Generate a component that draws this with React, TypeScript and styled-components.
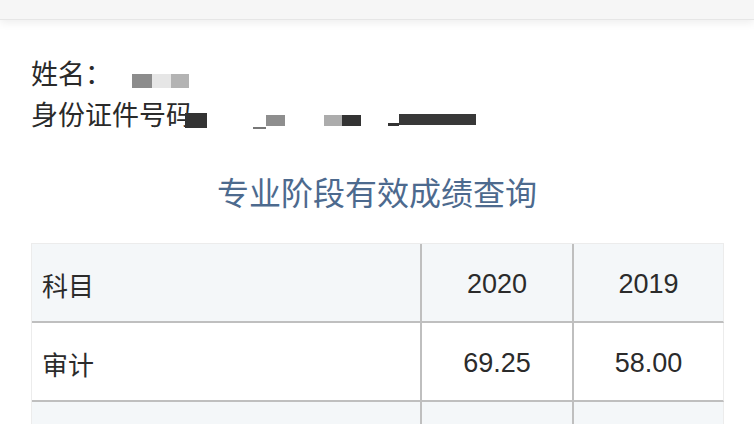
import React from "react";
import styled, { createGlobalStyle } from "styled-components";

const Global = createGlobalStyle`
  html, body { margin: 0; padding: 0; background: #ffffff; }
  body { font-family: "Liberation Sans", "Noto Sans CJK SC", sans-serif; color: #2b2b2b; overflow: hidden; }
`;

const Page = styled.div`
  width: 754px;
  height: 424px;
  overflow: hidden;
  display: flex;
  flex-direction: column;
`;

const TopBar = styled.div`
  height: 19px;
  flex: none;
  background: #f6f6f6;
  border-bottom: 1px solid #e6e6e6;
  box-shadow: 0 3px 8px rgba(0, 0, 0, 0.07);
`;

const Info = styled.div`
  margin-top: 32px;
  padding-left: 31px;
  display: flex;
  flex-direction: column;
  font-family: "Noto Sans CJK SC", sans-serif;
  font-size: 27px;
  line-height: 41px;
  color: #2a2a2a;
`;

const InfoLine = styled.div`
  display: flex;
  align-items: center;
  white-space: nowrap;
`;

const Mosaic = styled.span<{ $w: number; $h: number; $c: string; $ml?: number; $dy?: number }>`
  display: inline-block;
  width: ${(p) => p.$w}px;
  height: ${(p) => p.$h}px;
  background: ${(p) => p.$c};
  margin-left: ${(p) => p.$ml ?? 0}px;
  transform: translateY(${(p) => p.$dy ?? 0}px);
  filter: blur(0.4px);
`;

const Title = styled.h1`
  margin: 37px 0 0;
  text-align: center;
  font-family: "Noto Sans CJK SC", sans-serif;
  font-weight: 400;
  font-size: 32px;
  line-height: 40px;
  color: #4d6a8e;
`;

const Table = styled.div`
  margin: 32px 0 0 31px;
  width: 692px;
  display: grid;
  grid-template-columns: 390px 152px 150px;
  grid-auto-rows: 79px;
  border-top: 1px solid #ececec;
  border-left: 1px solid #ececec;
`;

const Cell = styled.div<{ $head?: boolean; $num?: boolean; $last?: boolean }>`
  display: flex;
  align-items: center;
  justify-content: ${(p) => (p.$num ? "center" : "flex-start")};
  padding-left: ${(p) => (p.$num ? 0 : 10)}px;
  padding-top: 4px;
  background: ${(p) => (p.$head ? "#f4f7f9" : "#ffffff")};
  border-bottom: 2px solid #bfbfbf;
  border-right: ${(p) => (p.$last ? "1px solid #ececec" : "2px solid #bfbfbf")};
  font-size: ${(p) => (p.$num ? 27 : 26)}px;
  color: #2b2b2b;
  font-family: ${(p) =>
    p.$num ? `"Liberation Sans", sans-serif` : `"Noto Sans CJK SC", sans-serif`};
`;

export default function App() {
  return (
    <>
      <Global />
      <Page>
        <TopBar />
        <Info>
          <InfoLine>
            姓名：
            <Mosaic $w={20} $h={14} $c="#8c8c8c" $ml={20} $dy={8} />
            <Mosaic $w={19} $h={14} $c="#e6e6e6" $dy={8} />
            <Mosaic $w={18} $h={14} $c="#b3b3b3" $dy={8} />
          </InfoLine>
          <InfoLine>
            身份证件号码
            <Mosaic $w={22} $h={15} $c="#333333" $ml={-8} $dy={7} />
            <Mosaic $w={13} $h={2} $c="#777777" $ml={46} $dy={14} />
            <Mosaic $w={19} $h={11} $c="#8e8e8e" $dy={7} />
            <Mosaic $w={18} $h={11} $c="#acacac" $ml={39} $dy={7} />
            <Mosaic $w={19} $h={11} $c="#333333" $dy={7} />
            <Mosaic $w={11} $h={3} $c="#333333" $ml={27} $dy={11} />
            <Mosaic $w={77} $h={11} $c="#383838" $dy={6} />
          </InfoLine>
        </Info>
        <Title>专业阶段有效成绩查询</Title>
        <Table>
          <Cell $head>科目</Cell>
          <Cell $head $num>2020</Cell>
          <Cell $head $num $last>2019</Cell>
          <Cell>审计</Cell>
          <Cell $num>69.25</Cell>
          <Cell $num $last>58.00</Cell>
          <Cell $head></Cell>
          <Cell $head $num></Cell>
          <Cell $head $num $last></Cell>
        </Table>
      </Page>
    </>
  );
}
